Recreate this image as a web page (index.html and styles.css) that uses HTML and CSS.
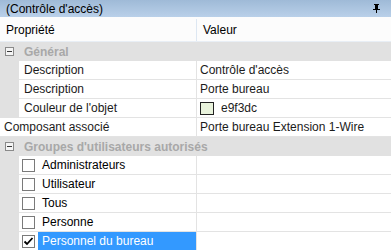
FILE: index.html
```html
<!DOCTYPE html>
<html>
<head>
<meta charset="utf-8">
<link rel="stylesheet" href="styles.css">
</head>
<body>
<div class="grid">
  <div class="titlebar">
    <span class="title">(Contrôle d'accès)</span>
    <svg class="pin" width="9" height="9" viewBox="0 0 9 9"><path d="M2 0h5v1H6v4h2v1H5v3H4V6H1V5h2V1H2z" fill="#000"/><rect x="4" y="1" width="1" height="4" fill="#000"/></svg>
  </div>
  <div class="header">
    <div class="hname">Propriété</div>
    <div class="hval">Valeur</div>
  </div>
  <div class="cat"><span class="minus"></span><span class="cattext">Général</span></div>
  <div class="row"><div class="gutter"></div><div class="name">Description</div><div class="val">Contrôle d'accès</div></div>
  <div class="row"><div class="gutter"></div><div class="name">Description</div><div class="val">Porte bureau</div></div>
  <div class="row"><div class="gutter"></div><div class="name">Couleur de l'objet</div><div class="val"><span class="swatch"></span>e9f3dc</div></div>
  <div class="row"><div class="name top">Composant associé</div><div class="val">Porte bureau Extension 1-Wire</div></div>
  <div class="cat"><span class="minus"></span><span class="cattext">Groupes d'utilisateurs autorisés</span></div>
  <div class="row"><div class="gutter"></div><div class="name chk"><span class="box"></span><span class="lbl">Administrateurs</span></div><div class="val"></div></div>
  <div class="row"><div class="gutter"></div><div class="name chk"><span class="box"></span><span class="lbl">Utilisateur</span></div><div class="val"></div></div>
  <div class="row"><div class="gutter"></div><div class="name chk"><span class="box"></span><span class="lbl">Tous</span></div><div class="val"></div></div>
  <div class="row"><div class="gutter"></div><div class="name chk"><span class="box"></span><span class="lbl">Personne</span></div><div class="val"></div></div>
  <div class="row"><div class="gutter"></div><div class="name chk"><span class="box checked"><svg width="11" height="11" viewBox="0 0 11 11"><path d="M1.5 5.5l2.5 2.5 5.5-6" fill="none" stroke="#000" stroke-width="1.8"/></svg></span><span class="lbl sel">Personnel du bureau</span></div><div class="val"></div></div>
</div>
</body>
</html>
```
FILE: styles.css
```css
* { box-sizing: border-box; }
html, body { margin: 0; padding: 0; background: #fff; }
body { font-family: "Liberation Sans", Arial, sans-serif; font-size: 12px; color: #1b1b1b; }
.grid { width: 391px; height: 250px; overflow: hidden; }
.titlebar {
  height: 17px;
  background: linear-gradient(#9fbad7, #b9d0e9);
  display: flex; align-items: center; justify-content: space-between;
  padding: 0 10px 0 6px;
}
.title { color: #000; }
.pin { display: block; margin-top: -1px; }
.header {
  height: 25px;
  display: flex;
  background: #fcfcfc;
  border-bottom: 1px solid #e8eef5;
  padding-top: 2px;
}
.hname { width: 196px; padding-left: 6px; line-height: 22px; color: #000; }
.hval { flex: 1; border-left: 1px solid #dde7f2; padding-left: 6px; line-height: 22px; color: #000; }
.cat {
  height: 19px;
  background: #e1e1e1;
  display: flex; align-items: center;
  padding-left: 5px;
}
.minus {
  width: 9px; height: 9px; border: 1px solid #8a8a8a; background: #f4f4f4;
  position: relative; margin-right: 10px;
}
.minus::after { content: ""; position: absolute; left: 1px; top: 3px; width: 5px; height: 1px; background: #3a3a3a; }
.cattext { font-weight: bold; color: #a8a8a8; }
.row { height: 19px; display: flex; border-bottom: 1px solid #e3e3e3; }
.gutter { width: 19px; background: #e1e1e1; margin-bottom: -1px; }
.name { width: 177px; padding-left: 5px; line-height: 18px; display: flex; align-items: center; }
.name.top { width: 196px; padding-left: 4px; }
.val { flex: 1; border-left: 1px solid #e3e3e3; padding-left: 3px; line-height: 18px; display: flex; align-items: center; }
.swatch { width: 14px; height: 13px; background: #e9f3dc; border: 1px solid #222; margin-left: 0; margin-right: 7px; }
.chk { padding-left: 3px; }
.box { width: 13px; height: 13px; border: 1px solid #7a7a7a; background: #fff; flex: none; display: flex; align-items: center; justify-content: center; }
.lbl { margin-left: 3px; padding-left: 4px; height: 18px; line-height: 18px; flex: 1; color: #000; }
.lbl.sel { background: #3399ff; color: #fff; }
```
